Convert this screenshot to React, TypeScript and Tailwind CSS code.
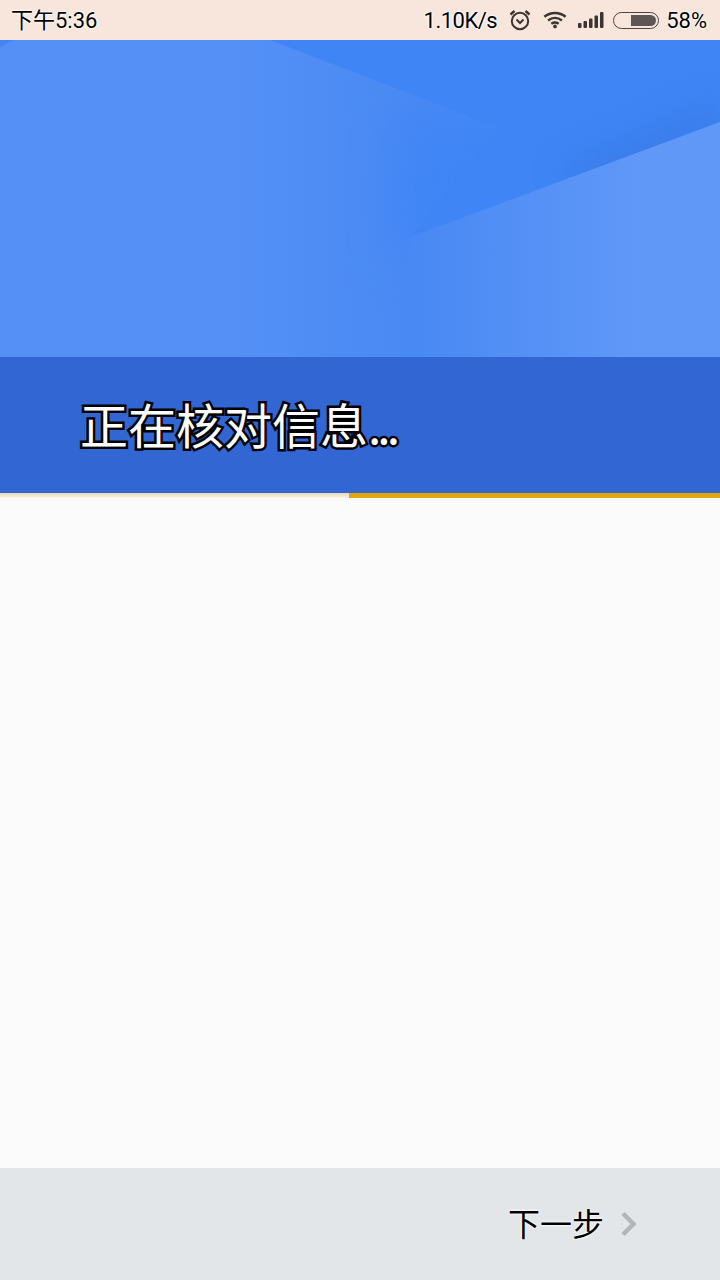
import React from 'react';

const haloText = '[text-shadow:0_0_2px_#fff,0_0_2px_#fff,0_0_3px_#fff]';

const StatusIcons: React.FC = () => (
  <div className="flex items-center">
    <svg width="24" height="24" viewBox="0 0 24 24" className="ml-[11px]" fill="none" stroke="#3b3532">
      <circle cx="12" cy="13" r="8.200" strokeWidth="2" />
      <path d="M8.500 11.500 12 15l3.500-3.500" strokeWidth="2" />
      <path d="M2.500 6.500 6.500 3M21.500 6.500 17.500 3" strokeWidth="2.400" />
    </svg>
    <svg width="24" height="20" viewBox="0 0 26 20" className="ml-[11px]" fill="none" stroke="#3b3532" strokeWidth="2.600">
      <path d="M1.500 6.500C8 1 18 1 24.500 6.500" />
      <path d="M5.500 10.500C10 7 16 7 20.500 10.500" />
      <path d="M9 14C11.500 12.300 14.500 12.300 17 14" />
      <circle cx="13" cy="17" r="2" fill="#3b3532" stroke="none" />
    </svg>
    <svg width="26" height="18" viewBox="0 0 26 18" className="ml-[11px]" fill="#3b3532">
      <rect x="0" y="12" width="3.500" height="5" rx="1" />
      <rect x="5.500" y="10" width="3.500" height="7" rx="1" />
      <rect x="11" y="7.500" width="3.500" height="9.500" rx="1" />
      <rect x="16.500" y="4.500" width="3.500" height="12.500" rx="1" />
      <rect x="22" y="1" width="3.500" height="16" rx="1" />
    </svg>
    <div className="ml-[9px] flex h-[17px] w-[46px] justify-end rounded-full border border-[#4a4340] p-[2px]">
      <div className="h-full w-[25px] rounded-l-[2px] rounded-r-full bg-[#5e5654]" />
    </div>
  </div>
);

const BannerArt: React.FC = () => (
  <svg width="720" height="317" viewBox="0 0 720 317" className="block">
    <defs>
      <linearGradient id="base" gradientUnits="userSpaceOnUse" x1="230" y1="0" x2="420" y2="0">
        <stop offset="0" stopColor="#5490f6" />
        <stop offset="1" stopColor="#4989f3" />
      </linearGradient>
      <linearGradient id="light" gradientUnits="userSpaceOnUse" x1="420" y1="0" x2="640" y2="0">
        <stop offset="0" stopColor="#4989f3" />
        <stop offset="1" stopColor="#6098f8" />
      </linearGradient>
      <filter id="softBlob" x="-50%" y="-50%" width="200%" height="200%">
        <feGaussianBlur stdDeviation="26" />
      </filter>
      <filter id="softShade" x="-50%" y="-50%" width="200%" height="200%">
        <feGaussianBlur stdDeviation="16" />
      </filter>
    </defs>
    <rect width="720" height="317" fill="url(#base)" />
    <path d="M0 0H14L0 7Z" fill="#4386f2" />
    <path d="M400 70H560V190L390 210Z" fill="#4085f6" filter="url(#softBlob)" />
    <path d="M270 0H720V82L410 197 500 88Z" fill="#3f85f6" />
    <path d="M560 130 720 60V95L580 155Z" fill="#3472dc" opacity="0.5" filter="url(#softShade)" />
    <path d="M720 82V317H400L410 197Z" fill="url(#light)" />
  </svg>
);

const App: React.FC = () => {
  return (
    <div className="flex h-[1280px] w-[720px] flex-col overflow-hidden bg-[#fbfbfb] font-['Roboto','Noto_Sans_CJK_SC',sans-serif]">
      <div className="flex h-10 items-center justify-between bg-[#f8e6dc] pr-[13px] pl-[11px] text-[22px] text-black">
        <span className={haloText}>下午5:36</span>
        <div className="flex items-center">
          <span className={`tracking-[-0.5px] ${haloText}`}>1.10K/s</span>
          <StatusIcons />
          <span className={`ml-[7px] ${haloText}`}>58%</span>
        </div>
      </div>

      <BannerArt />

      <div className="flex h-[136px] items-center bg-[#3266d2] pb-[5px] pl-20">
        <h1 className="font-['Noto_Sans_CJK_SC',sans-serif] text-[48px] leading-none font-normal text-white [-webkit-text-stroke:5px_#000] [paint-order:stroke_fill]">
          正在核对信息<span className="tracking-[-4px]">...</span>
        </h1>
      </div>

      <div className="flex h-[5px]">
        <div className="w-[349px] bg-gradient-to-b from-[#e6d6b6] to-[#fdf6e6]" />
        <div className="flex-1 bg-[#e2a50e]" />
      </div>

      <main className="flex-1" />

      <footer className="flex h-28 items-center justify-end gap-4 bg-[#e2e6e9] pr-[83px]">
        <span className={`pb-1 font-['Noto_Sans_CJK_SC',sans-serif] text-[32px] leading-none font-normal text-black ${haloText}`}>
          下一步
        </span>
        <svg width="17" height="26" viewBox="0 0 17 26" fill="none" stroke="#b3b6b9" strokeWidth="4.500">
          <path d="M3 2.500 13.500 13 3 23.500" />
        </svg>
      </footer>
    </div>
  );
};

export default App;
